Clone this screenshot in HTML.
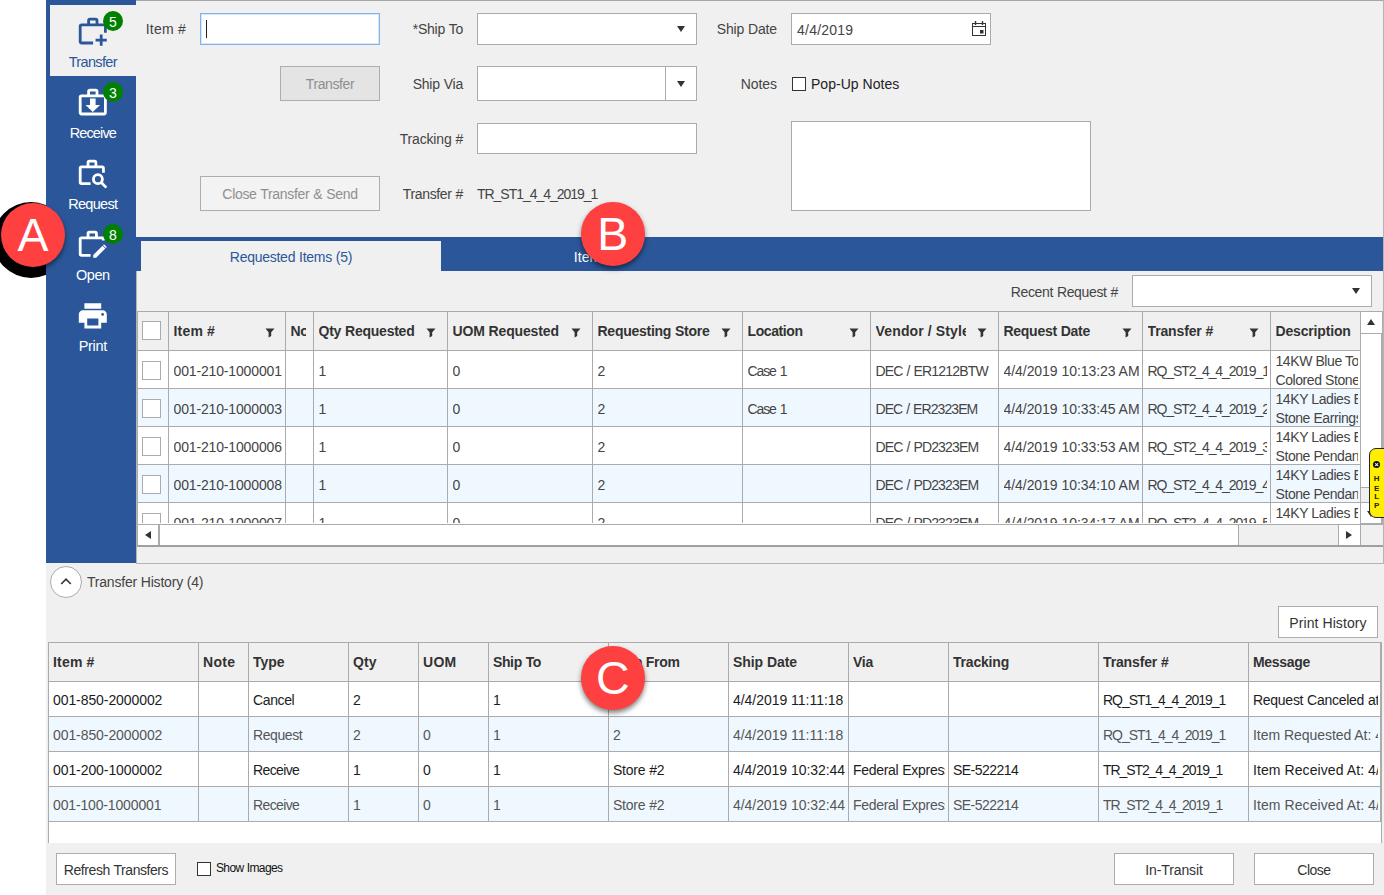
<!DOCTYPE html>
<html>
<head>
<meta charset="utf-8">
<title>Transfer</title>
<style>
*{box-sizing:border-box;margin:0;padding:0}
html,body{width:1384px;height:895px;overflow:hidden;background:#fff}
body{position:relative;font-family:"Liberation Sans",sans-serif;font-size:14px;color:#444;letter-spacing:-0.15px}
.abs{position:absolute}
#app{position:absolute;left:46px;top:0;width:1338px;height:895px;background:#f0f0f0}
#topline{position:absolute;left:136px;top:0;width:1248px;height:1px;background:#a6a6a6}
#rightline{position:absolute;left:1383px;top:0;width:1px;height:564px;background:#b4b4b4}
#side{position:absolute;left:46px;top:0;width:90px;height:563px;background:#2b579a}
#seltab{position:absolute;left:50px;top:5px;width:86px;height:71px;background:#f0f0f0}
.slabel{position:absolute;left:46px;width:94px;text-align:center;color:#fff;font-size:14.5px;line-height:16px}
.badge{position:absolute;width:20px;height:20px;border-radius:50%;background:#008000;color:#fff;font-size:14px;line-height:22.6px;text-align:center;letter-spacing:0}
.t{position:absolute;line-height:18px;height:18px;white-space:pre}
.box{position:absolute;background:#fff;border:1px solid #ababab}
.btn{position:absolute;border:1px solid #adadad;text-align:center;white-space:nowrap}
.arrow{position:absolute;width:0;height:0;border-left:4.4px solid transparent;border-right:4.4px solid transparent;border-top:6px solid #333}
#bluebar{position:absolute;left:136px;top:237px;width:1247px;height:34px;background:#2b579a}
#tab1{position:absolute;left:141px;top:241px;width:300px;height:30px;background:#f0f0f0}
.cb{position:absolute;background:#fff;border:1px solid #ababab}
.hl{position:absolute;height:1px;background:#ababab}
.vl{position:absolute;width:1px;background:#ababab}
.clip{position:absolute;overflow:hidden}
</style>
</head>
<body>
<div id="app"></div><div id="topline"></div><div id="rightline"></div><div id="side"></div><div id="seltab"></div><svg class="abs" style="left:76.4px;top:15.2px" width="33.6" height="33.6" viewBox="0 0 24 24" fill="none" stroke="#2b579a" stroke-width="2"><path d="M12.2 20H4a1 1 0 0 1-1-1V8a1 1 0 0 1 1-1H21V12.6"/><path d="M9 7V4a1 1 0 0 1 1-1h4a1 1 0 0 1 1 1V7"/><path d="M14 18H22M18 14V22"/></svg><svg class="abs" style="left:76.4px;top:86.2px" width="33.6" height="33.6" viewBox="0 0 24 24" fill="none" stroke="#fff" stroke-width="2"><path d="M4 7H20a1 1 0 0 1 1 1V19a1 1 0 0 1-1 1H4a1 1 0 0 1-1-1V8a1 1 0 0 1 1-1z"/><path d="M9 7V4a1 1 0 0 1 1-1h4a1 1 0 0 1 1 1V7"/><path d="M10 9h4v4.5h3.2l-5.2 5-5.2-5H10z" fill="#fff" stroke="none"/></svg><svg class="abs" style="left:76.4px;top:157.2px" width="33.6" height="33.6" viewBox="0 0 24 24" fill="none" stroke="#fff" stroke-width="2"><path d="M10.4 19H4a1 1 0 0 1-1-1V8a1 1 0 0 1 1-1H18.6a1 1 0 0 1 1 1V11.2"/><path d="M8.6 7V4a1 1 0 0 1 1-1h3.6a1 1 0 0 1 1 1V7"/><circle cx="15.65" cy="15.85" r="3.2"/><path d="M18 18.2L21.7 21.9" stroke-width="1.9"/></svg><svg class="abs" style="left:76.4px;top:228.2px" width="33.6" height="33.6" viewBox="0 0 24 24" fill="none" stroke="#fff" stroke-width="2"><path d="M10.4 19.6H4a1 1 0 0 1-1-1V8a1 1 0 0 1 1-1H19.5V9"/><path d="M8.6 7V4a1 1 0 0 1 1-1h4a1 1 0 0 1 1 1V7"/><path d="M12.3 21.2V19.3L18.95 12.65 20.95 14.65 14.4 21.2z M19.3 12.3L20 11.6 22 13.6 21.3 14.3z" fill="#fff" stroke="none"/></svg><svg class="abs" style="left:76.4px;top:299.2px" width="33.6" height="33.6" viewBox="0 0 24 24"><path fill="#fff" d="M18,3H6V7H18M19,12A1,1 0 0,1 18,11A1,1 0 0,1 19,10A1,1 0 0,1 20,11A1,1 0 0,1 19,12M16,19H8V14H16M19,8H5A3,3 0 0,0 2,11V17H6V21H18V17H22V11A3,3 0 0,0 19,8Z"/></svg><div class="t" style="left:-57.2px;width:300px;text-align:center;top:53px;color:#2b579a;font-size:14.5px;letter-spacing:-0.644px;">Transfer</div><div class="t" style="left:-57.2px;width:300px;text-align:center;top:124px;color:#fff;font-size:14.5px;letter-spacing:-0.87px;">Receive</div><div class="t" style="left:-57.2px;width:300px;text-align:center;top:195px;color:#fff;font-size:14.5px;letter-spacing:-0.674px;">Request</div><div class="t" style="left:-57.2px;width:300px;text-align:center;top:266px;color:#fff;font-size:14.5px;letter-spacing:-0.421px;">Open</div><div class="t" style="left:-57.2px;width:300px;text-align:center;top:337px;color:#fff;font-size:14.5px;letter-spacing:-0.306px;">Print</div><div class="badge" style="left:103px;top:11px">5</div><div class="badge" style="left:103px;top:82px">3</div><div class="badge" style="left:103px;top:224px">8</div><div class="t" style="right:1198px;top:20px;letter-spacing:0.279px;word-spacing:-0.279px;">Item #</div><div class="box" style="left:200px;top:13px;width:180px;height:32px;border-color:#7eb4ea;box-shadow:inset 0 0 0 1px #d6e8f9"></div><div class="abs" style="left:206px;top:20px;width:1px;height:18px;background:#222;"></div><div class="btn" style="left:280px;top:66px;width:100px;height:35px;line-height:34px;background:#e4e4e4;color:#8f8f8f;letter-spacing:-0.414px;">Transfer</div><div class="btn" style="left:200px;top:176px;width:180px;height:35px;line-height:34px;background:#f3f3f3;color:#8f8f8f;letter-spacing:-0.309px;word-spacing:0.309px;">Close Transfer &amp; Send</div><div class="t" style="right:921px;top:20px;letter-spacing:-0.229px;word-spacing:0.229px;">*Ship To</div><div class="box" style="left:477px;top:13px;width:220px;height:32px;"></div><div class="arrow" style="left:676.7px;top:26px"></div><div class="t" style="right:921px;top:75px;letter-spacing:-0.229px;word-spacing:0.229px;">Ship Via</div><div class="box" style="left:477px;top:66px;width:220px;height:35px;"></div><div class="vl" style="left:665px;top:67px;height:33px;background:#ababab"></div><div class="arrow" style="left:676.7px;top:81px"></div><div class="t" style="right:921px;top:130px;letter-spacing:-0.172px;word-spacing:0.172px;">Tracking #</div><div class="box" style="left:477px;top:123px;width:220px;height:31px;"></div><div class="t" style="right:921px;top:185px;letter-spacing:-0.331px;word-spacing:0.331px;">Transfer #</div><div class="t" style="left:477px;top:185px;letter-spacing:-1.028px;">TR_ST1_4_4_2019_1</div><div class="t" style="right:607px;top:20px;letter-spacing:-0.148px;word-spacing:0.148px;">Ship Date</div><div class="box" style="left:791px;top:13px;width:200px;height:32px;"></div><div class="t" style="left:797px;top:21px;letter-spacing:0.225px;">4/4/2019</div><svg class="abs" style="left:971px;top:20px" width="16" height="17" viewBox="0 0 16 17" fill="none" stroke="#333" stroke-width="1"><rect x="1.5" y="3.5" width="13" height="12"/><path d="M1.5 6.5H14.5"/><path d="M4.5 1V5M11.5 1V5" stroke-width="1.4"/><rect x="9" y="10" width="3.5" height="3.5" fill="#333" stroke="none"/></svg><div class="t" style="right:607px;top:75px;letter-spacing:-0.056px;">Notes</div><div class="cb" style="left:792px;top:77px;width:14px;height:14px;border-color:#333"></div><div class="t" style="left:811px;top:75px;color:#222;letter-spacing:0.033px;word-spacing:-0.033px;">Pop-Up Notes</div><div class="box" style="left:791px;top:121px;width:300px;height:90px;"></div><div id="bluebar"></div><div id="tab1"></div><div class="t" style="left:141px;width:300px;text-align:center;top:248px;color:#2b579a;letter-spacing:-0.267px;word-spacing:0.267px;">Requested Items (5)</div><div class="t" style="left:441px;width:300px;text-align:center;top:248px;color:#fff;letter-spacing:0.013px;">Items</div><div class="t" style="right:266px;top:283px;letter-spacing:-0.341px;word-spacing:0.341px;">Recent Request #</div><div class="box" style="left:1132px;top:275px;width:240px;height:32px;"></div><div class="arrow" style="left:1351.7px;top:288px"></div><div class="abs" style="left:137px;top:311px;width:1246px;height:235px;background:#fff;"></div><div class="abs" style="left:137px;top:311px;width:1223px;height:39px;background:#f0f0f0;"></div><div class="abs" style="left:137px;top:388px;width:1223px;height:38px;background:#f0f8ff;"></div><div class="abs" style="left:137px;top:464px;width:1223px;height:38px;background:#f0f8ff;"></div><div class="clip" style="left:173.5px;top:322px;width:79px;height:20px"><div class="t" style="left:0;top:0;font-weight:bold;color:#333;letter-spacing:0.226px;word-spacing:-0.226px;">Item #</div></div><svg class="abs" style="left:264.5px;top:327.5px" width="10" height="10" viewBox="0 0 10 10"><path d="M0.5 0.5H9.5L6.2 4.3V8L3.6 9.5V4.3Z" fill="#333"/></svg><div class="clip" style="left:290.5px;top:322px;width:15px;height:20px"><div class="t" style="left:0;top:0;font-weight:bold;color:#333;letter-spacing:-0.25px;">No</div></div><div class="clip" style="left:318.5px;top:322px;width:96px;height:20px"><div class="t" style="left:0;top:0;font-weight:bold;color:#333;letter-spacing:-0.234px;word-spacing:0.234px;">Qty Requested</div></div><svg class="abs" style="left:426px;top:327.5px" width="10" height="10" viewBox="0 0 10 10"><path d="M0.5 0.5H9.5L6.2 4.3V8L3.6 9.5V4.3Z" fill="#333"/></svg><div class="clip" style="left:452.5px;top:322px;width:107px;height:20px"><div class="t" style="left:0;top:0;font-weight:bold;color:#333;letter-spacing:-0.152px;word-spacing:0.152px;">UOM Requested</div></div><svg class="abs" style="left:571px;top:327.5px" width="10" height="10" viewBox="0 0 10 10"><path d="M0.5 0.5H9.5L6.2 4.3V8L3.6 9.5V4.3Z" fill="#333"/></svg><div class="clip" style="left:597.5px;top:322px;width:112px;height:20px"><div class="t" style="left:0;top:0;font-weight:bold;color:#333;letter-spacing:-0.26px;word-spacing:0.26px;">Requesting Store</div></div><svg class="abs" style="left:721px;top:327.5px" width="10" height="10" viewBox="0 0 10 10"><path d="M0.5 0.5H9.5L6.2 4.3V8L3.6 9.5V4.3Z" fill="#333"/></svg><div class="clip" style="left:747.5px;top:322px;width:90px;height:20px"><div class="t" style="left:0;top:0;font-weight:bold;color:#333;letter-spacing:-0.393px;">Location</div></div><svg class="abs" style="left:849px;top:327.5px" width="10" height="10" viewBox="0 0 10 10"><path d="M0.5 0.5H9.5L6.2 4.3V8L3.6 9.5V4.3Z" fill="#333"/></svg><div class="clip" style="left:875.5px;top:322px;width:90px;height:20px"><div class="t" style="left:0;top:0;font-weight:bold;color:#333;letter-spacing:0.159px;word-spacing:-0.159px;">Vendor / Style</div></div><svg class="abs" style="left:976.5px;top:327.5px" width="10" height="10" viewBox="0 0 10 10"><path d="M0.5 0.5H9.5L6.2 4.3V8L3.6 9.5V4.3Z" fill="#333"/></svg><div class="clip" style="left:1003.5px;top:322px;width:106px;height:20px"><div class="t" style="left:0;top:0;font-weight:bold;color:#333;letter-spacing:-0.279px;word-spacing:0.279px;">Request Date</div></div><svg class="abs" style="left:1121.7px;top:327.5px" width="10" height="10" viewBox="0 0 10 10"><path d="M0.5 0.5H9.5L6.2 4.3V8L3.6 9.5V4.3Z" fill="#333"/></svg><div class="clip" style="left:1147.5px;top:322px;width:90px;height:20px"><div class="t" style="left:0;top:0;font-weight:bold;color:#333;letter-spacing:-0.137px;word-spacing:0.137px;">Transfer #</div></div><svg class="abs" style="left:1249.3px;top:327.5px" width="10" height="10" viewBox="0 0 10 10"><path d="M0.5 0.5H9.5L6.2 4.3V8L3.6 9.5V4.3Z" fill="#333"/></svg><div class="clip" style="left:1275.5px;top:322px;width:78px;height:20px"><div class="t" style="left:0;top:0;font-weight:bold;color:#333;letter-spacing:-0.165px;">Description</div></div><div class="clip" style="left:0;top:0;width:1384px;height:522.5px"><div class="cb" style="left:142px;top:361px;width:19px;height:19px"></div><div class="clip" style="left:173.5px;top:362px;width:108.5px;height:20px"><div class="t" style="left:0;top:0;letter-spacing:-0.15px;">001-210-1000001</div></div><div class="clip" style="left:318.5px;top:362px;width:125.5px;height:20px"><div class="t" style="left:0;top:0;letter-spacing:-0.15px;">1</div></div><div class="clip" style="left:452.5px;top:362px;width:136.5px;height:20px"><div class="t" style="left:0;top:0;letter-spacing:-0.15px;">0</div></div><div class="clip" style="left:597.5px;top:362px;width:141.5px;height:20px"><div class="t" style="left:0;top:0;letter-spacing:-0.15px;">2</div></div><div class="clip" style="left:747.5px;top:362px;width:119.5px;height:20px"><div class="t" style="left:0;top:0;letter-spacing:-1.092px;word-spacing:1.092px;">Case 1</div></div><div class="clip" style="left:875.5px;top:362px;width:119.5px;height:20px"><div class="t" style="left:0;top:0;letter-spacing:-0.818px;word-spacing:0.818px;">DEC / ER1212BTW</div></div><div class="clip" style="left:1003.5px;top:362px;width:135.5px;height:20px"><div class="t" style="left:0;top:0;letter-spacing:-0.056px;word-spacing:0.056px;">4/4/2019 10:13:23 AM</div></div><div class="clip" style="left:1147.5px;top:362px;width:119.5px;height:20px"><div class="t" style="left:0;top:0;letter-spacing:-1.106px;">RQ_ST2_4_4_2019_1</div></div><div class="clip" style="left:1275.5px;top:352px;width:82.5px;height:38px"><div class="t" style="left:0;top:0;letter-spacing:-0.15px;letter-spacing:-0.42px">14KW Blue Topaz</div><div class="t" style="left:0;top:19px;letter-spacing:-0.42px">Colored Stone</div></div><div class="cb" style="left:142px;top:399px;width:19px;height:19px"></div><div class="clip" style="left:173.5px;top:400px;width:108.5px;height:20px"><div class="t" style="left:0;top:0;letter-spacing:-0.15px;">001-210-1000003</div></div><div class="clip" style="left:318.5px;top:400px;width:125.5px;height:20px"><div class="t" style="left:0;top:0;letter-spacing:-0.15px;">1</div></div><div class="clip" style="left:452.5px;top:400px;width:136.5px;height:20px"><div class="t" style="left:0;top:0;letter-spacing:-0.15px;">0</div></div><div class="clip" style="left:597.5px;top:400px;width:141.5px;height:20px"><div class="t" style="left:0;top:0;letter-spacing:-0.15px;">2</div></div><div class="clip" style="left:747.5px;top:400px;width:119.5px;height:20px"><div class="t" style="left:0;top:0;letter-spacing:-1.092px;word-spacing:1.092px;">Case 1</div></div><div class="clip" style="left:875.5px;top:400px;width:119.5px;height:20px"><div class="t" style="left:0;top:0;letter-spacing:-0.919px;word-spacing:0.919px;">DEC / ER2323EM</div></div><div class="clip" style="left:1003.5px;top:400px;width:135.5px;height:20px"><div class="t" style="left:0;top:0;letter-spacing:-0.056px;word-spacing:0.056px;">4/4/2019 10:33:45 AM</div></div><div class="clip" style="left:1147.5px;top:400px;width:119.5px;height:20px"><div class="t" style="left:0;top:0;letter-spacing:-1.106px;">RQ_ST2_4_4_2019_2</div></div><div class="clip" style="left:1275.5px;top:390px;width:82.5px;height:38px"><div class="t" style="left:0;top:0;letter-spacing:-0.15px;letter-spacing:-0.42px">14KY Ladies Emerald</div><div class="t" style="left:0;top:19px;letter-spacing:-0.42px">Stone Earrings</div></div><div class="cb" style="left:142px;top:437px;width:19px;height:19px"></div><div class="clip" style="left:173.5px;top:438px;width:108.5px;height:20px"><div class="t" style="left:0;top:0;letter-spacing:-0.15px;">001-210-1000006</div></div><div class="clip" style="left:318.5px;top:438px;width:125.5px;height:20px"><div class="t" style="left:0;top:0;letter-spacing:-0.15px;">1</div></div><div class="clip" style="left:452.5px;top:438px;width:136.5px;height:20px"><div class="t" style="left:0;top:0;letter-spacing:-0.15px;">0</div></div><div class="clip" style="left:597.5px;top:438px;width:141.5px;height:20px"><div class="t" style="left:0;top:0;letter-spacing:-0.15px;">2</div></div><div class="clip" style="left:875.5px;top:438px;width:119.5px;height:20px"><div class="t" style="left:0;top:0;letter-spacing:-0.836px;word-spacing:0.836px;">DEC / PD2323EM</div></div><div class="clip" style="left:1003.5px;top:438px;width:135.5px;height:20px"><div class="t" style="left:0;top:0;letter-spacing:-0.056px;word-spacing:0.056px;">4/4/2019 10:33:53 AM</div></div><div class="clip" style="left:1147.5px;top:438px;width:119.5px;height:20px"><div class="t" style="left:0;top:0;letter-spacing:-1.106px;">RQ_ST2_4_4_2019_3</div></div><div class="clip" style="left:1275.5px;top:428px;width:82.5px;height:38px"><div class="t" style="left:0;top:0;letter-spacing:-0.15px;letter-spacing:-0.42px">14KY Ladies Emerald</div><div class="t" style="left:0;top:19px;letter-spacing:-0.42px">Stone Pendant</div></div><div class="cb" style="left:142px;top:475px;width:19px;height:19px"></div><div class="clip" style="left:173.5px;top:476px;width:108.5px;height:20px"><div class="t" style="left:0;top:0;letter-spacing:-0.15px;">001-210-1000008</div></div><div class="clip" style="left:318.5px;top:476px;width:125.5px;height:20px"><div class="t" style="left:0;top:0;letter-spacing:-0.15px;">1</div></div><div class="clip" style="left:452.5px;top:476px;width:136.5px;height:20px"><div class="t" style="left:0;top:0;letter-spacing:-0.15px;">0</div></div><div class="clip" style="left:597.5px;top:476px;width:141.5px;height:20px"><div class="t" style="left:0;top:0;letter-spacing:-0.15px;">2</div></div><div class="clip" style="left:875.5px;top:476px;width:119.5px;height:20px"><div class="t" style="left:0;top:0;letter-spacing:-0.836px;word-spacing:0.836px;">DEC / PD2323EM</div></div><div class="clip" style="left:1003.5px;top:476px;width:135.5px;height:20px"><div class="t" style="left:0;top:0;letter-spacing:-0.056px;word-spacing:0.056px;">4/4/2019 10:34:10 AM</div></div><div class="clip" style="left:1147.5px;top:476px;width:119.5px;height:20px"><div class="t" style="left:0;top:0;letter-spacing:-1.106px;">RQ_ST2_4_4_2019_4</div></div><div class="clip" style="left:1275.5px;top:466px;width:82.5px;height:38px"><div class="t" style="left:0;top:0;letter-spacing:-0.15px;letter-spacing:-0.42px">14KY Ladies Emerald</div><div class="t" style="left:0;top:19px;letter-spacing:-0.42px">Stone Pendant</div></div><div class="cb" style="left:142px;top:513px;width:19px;height:19px"></div><div class="clip" style="left:173.5px;top:514px;width:108.5px;height:20px"><div class="t" style="left:0;top:0;letter-spacing:-0.15px;">001-210-1000007</div></div><div class="clip" style="left:318.5px;top:514px;width:125.5px;height:20px"><div class="t" style="left:0;top:0;letter-spacing:-0.15px;">1</div></div><div class="clip" style="left:452.5px;top:514px;width:136.5px;height:20px"><div class="t" style="left:0;top:0;letter-spacing:-0.15px;">0</div></div><div class="clip" style="left:597.5px;top:514px;width:141.5px;height:20px"><div class="t" style="left:0;top:0;letter-spacing:-0.15px;">2</div></div><div class="clip" style="left:875.5px;top:514px;width:119.5px;height:20px"><div class="t" style="left:0;top:0;letter-spacing:-0.836px;word-spacing:0.836px;">DEC / PD2323EM</div></div><div class="clip" style="left:1003.5px;top:514px;width:135.5px;height:20px"><div class="t" style="left:0;top:0;letter-spacing:-0.056px;word-spacing:0.056px;">4/4/2019 10:34:17 AM</div></div><div class="clip" style="left:1147.5px;top:514px;width:119.5px;height:20px"><div class="t" style="left:0;top:0;letter-spacing:-1.106px;">RQ_ST2_4_4_2019_5</div></div><div class="clip" style="left:1275.5px;top:504px;width:82.5px;height:38px"><div class="t" style="left:0;top:0;letter-spacing:-0.15px;letter-spacing:-0.42px">14KY Ladies Emerald</div><div class="t" style="left:0;top:19px;letter-spacing:-0.42px">Stone Pendant</div></div><div class="hl" style="left:137px;top:350px;width:1223px;background:#ababab"></div><div class="hl" style="left:137px;top:388px;width:1223px;background:#ababab"></div><div class="hl" style="left:137px;top:426px;width:1223px;background:#ababab"></div><div class="hl" style="left:137px;top:464px;width:1223px;background:#ababab"></div><div class="hl" style="left:137px;top:502px;width:1223px;background:#ababab"></div><div class="hl" style="left:137px;top:540px;width:1223px;background:#ababab"></div></div><div class="cb" style="left:142px;top:321px;width:19px;height:19px"></div><div class="vl" style="left:168px;top:311px;height:211.5px;background:#ababab"></div><div class="vl" style="left:285px;top:311px;height:211.5px;background:#ababab"></div><div class="vl" style="left:313px;top:311px;height:211.5px;background:#ababab"></div><div class="vl" style="left:447px;top:311px;height:211.5px;background:#ababab"></div><div class="vl" style="left:592px;top:311px;height:211.5px;background:#ababab"></div><div class="vl" style="left:742px;top:311px;height:211.5px;background:#ababab"></div><div class="vl" style="left:870px;top:311px;height:211.5px;background:#ababab"></div><div class="vl" style="left:998px;top:311px;height:211.5px;background:#ababab"></div><div class="vl" style="left:1142px;top:311px;height:211.5px;background:#ababab"></div><div class="vl" style="left:1270px;top:311px;height:211.5px;background:#ababab"></div><div class="vl" style="left:1360px;top:311px;height:235px;background:#ababab"></div><div class="hl" style="left:137px;top:311px;width:1246px;background:#ababab"></div><div class="vl" style="left:137px;top:311px;height:235px;background:#ababab"></div><div class="hl" style="left:137px;top:545px;width:1246px;background:#a0a0a0"></div><div class="hl" style="left:137px;top:546px;width:1246px;background:#a0a0a0"></div><div class="abs" style="left:1361px;top:313px;width:22px;height:211px;background:#f0f0f0;"></div><div class="abs" style="left:1361px;top:312px;width:21px;height:21px;background:#fff;"></div><div class="abs" style="left:1360px;top:333px;width:22px;height:155px;background:#fff;border:1px solid #ababab"></div><div class="hl" style="left:1361px;top:333px;width:22px;background:#ababab"></div><div class="vl" style="left:1382px;top:312px;height:212px;background:#ababab"></div><div class="abs" style="left:1366.6px;top:318.5px;width:0;height:0;border-left:4.4px solid transparent;border-right:4.4px solid transparent;border-bottom:6px solid #333"></div><div class="abs" style="left:1360px;top:502px;width:22px;height:22px;background:#fff;border:1px solid #ababab"></div><div class="abs" style="left:1366.6px;top:511px;width:0;height:0;border-left:4.4px solid transparent;border-right:4.4px solid transparent;border-top:6px solid #333"></div><div class="hl" style="left:137px;top:524px;width:1246px;background:#ababab"></div><div class="abs" style="left:139px;top:525px;width:1244px;height:20px;background:#f0f0f0;"></div><div class="abs" style="left:160px;top:525px;width:1078px;height:20px;background:#fff;"></div><div class="vl" style="left:158px;top:525px;height:20px;background:#ababab"></div><div class="vl" style="left:159px;top:525px;height:20px;background:#ababab"></div><div class="vl" style="left:1238px;top:525px;height:20px;background:#ababab"></div><div class="vl" style="left:1338px;top:525px;height:20px;background:#ababab"></div><div class="vl" style="left:1360px;top:525px;height:20px;background:#ababab"></div><div class="abs" style="left:1339px;top:525px;width:21px;height:20px;background:#fff;"></div><div class="abs" style="left:138px;top:525px;width:20px;height:20px;background:#fff;"></div><div class="abs" style="left:145px;top:531px;width:0;height:0;border-top:4px solid transparent;border-bottom:4px solid transparent;border-right:6.5px solid #333"></div><div class="abs" style="left:1346px;top:531px;width:0;height:0;border-top:4px solid transparent;border-bottom:4px solid transparent;border-left:6.5px solid #333"></div><div class="abs" style="left:1369px;top:448px;width:20px;height:70px;background:#ffee00;border:1px solid #222;border-radius:7px 0 0 7px"></div><div class="abs" style="left:1372.7px;top:461.1px;width:7.4px;height:7.4px;border-radius:50%;background:#111"></div><svg class="abs" style="left:1372.7px;top:461.1px" width="7.4" height="7.4" viewBox="0 0 8 8"><path d="M2.4 2.6L5.6 5.4M5.6 2.6L2.4 5.4" stroke="#fff" stroke-width="1.1"/></svg><div class="abs" style="left:1371.6px;top:474px;width:10px;text-align:center;font-size:8px;font-weight:bold;line-height:10px;color:#2a1c00;letter-spacing:0">H</div><div class="abs" style="left:1371.6px;top:483.6px;width:10px;text-align:center;font-size:8px;font-weight:bold;line-height:10px;color:#2a1c00;letter-spacing:0">E</div><div class="abs" style="left:1371.6px;top:492.2px;width:10px;text-align:center;font-size:8px;font-weight:bold;line-height:10px;color:#2a1c00;letter-spacing:0">L</div><div class="abs" style="left:1371.6px;top:501.2px;width:10px;text-align:center;font-size:8px;font-weight:bold;line-height:10px;color:#2a1c00;letter-spacing:0">P</div><div class="vl" style="left:136px;top:271px;height:292px;background:#b4b4b4"></div><div class="hl" style="left:136px;top:563px;width:1248px;background:#b4b4b4"></div><div class="abs" style="left:50px;top:566px;width:32px;height:32px;border-radius:50%;background:#fff;border:1px solid #ababab"></div><svg class="abs" style="left:59px;top:576px" width="14" height="10" viewBox="0 0 14 10"><path d="M2.2 8L7 3.2L11.8 8" fill="none" stroke="#333" stroke-width="1.6"/></svg><div class="t" style="left:87px;top:573px;letter-spacing:-0.209px;word-spacing:0.209px;">Transfer History (4)</div><div class="btn" style="left:1278px;top:606px;width:100px;height:32px;line-height:32px;background:#fff;color:#333;letter-spacing:0.089px;word-spacing:-0.089px;">Print History</div><div class="abs" style="left:48px;top:642px;width:1334px;height:201px;background:#fff;"></div><div class="abs" style="left:48px;top:642px;width:1334px;height:39px;background:#f0f0f0;"></div><div class="abs" style="left:48px;top:716px;width:1334px;height:35px;background:#f0f8ff;"></div><div class="abs" style="left:48px;top:786px;width:1334px;height:35px;background:#f0f8ff;"></div><div class="clip" style="left:53px;top:653px;width:142px;height:20px"><div class="t" style="left:0;top:0;font-weight:bold;color:#333;letter-spacing:0.226px;word-spacing:-0.226px;">Item #</div></div><div class="clip" style="left:203px;top:653px;width:42px;height:20px"><div class="t" style="left:0;top:0;font-weight:bold;color:#333;letter-spacing:0.344px;">Note</div></div><div class="clip" style="left:253px;top:653px;width:92px;height:20px"><div class="t" style="left:0;top:0;font-weight:bold;color:#333;letter-spacing:-0.035px;">Type</div></div><div class="clip" style="left:353px;top:653px;width:62px;height:20px"><div class="t" style="left:0;top:0;font-weight:bold;color:#333;letter-spacing:0.052px;">Qty</div></div><div class="clip" style="left:423px;top:653px;width:62px;height:20px"><div class="t" style="left:0;top:0;font-weight:bold;color:#333;letter-spacing:0.276px;">UOM</div></div><div class="clip" style="left:493px;top:653px;width:112px;height:20px"><div class="t" style="left:0;top:0;font-weight:bold;color:#333;letter-spacing:-0.383px;word-spacing:0.383px;">Ship To</div></div><div class="clip" style="left:613px;top:653px;width:112px;height:20px"><div class="t" style="left:0;top:0;font-weight:bold;color:#333;letter-spacing:-0.342px;word-spacing:0.342px;">Ship From</div></div><div class="clip" style="left:733px;top:653px;width:112px;height:20px"><div class="t" style="left:0;top:0;font-weight:bold;color:#333;letter-spacing:-0.072px;word-spacing:0.072px;">Ship Date</div></div><div class="clip" style="left:853px;top:653px;width:92px;height:20px"><div class="t" style="left:0;top:0;font-weight:bold;color:#333;letter-spacing:-0.255px;">Via</div></div><div class="clip" style="left:953px;top:653px;width:142px;height:20px"><div class="t" style="left:0;top:0;font-weight:bold;color:#333;letter-spacing:-0.199px;">Tracking</div></div><div class="clip" style="left:1103px;top:653px;width:142px;height:20px"><div class="t" style="left:0;top:0;font-weight:bold;color:#333;letter-spacing:-0.137px;word-spacing:0.137px;">Transfer #</div></div><div class="clip" style="left:1253px;top:653px;width:125px;height:20px"><div class="t" style="left:0;top:0;font-weight:bold;color:#333;letter-spacing:-0.308px;">Message</div></div><div class="clip" style="left:53px;top:691px;width:142px;height:20px"><div class="t" style="left:0;top:0;color:#1c1c1c;letter-spacing:-0.083px;">001-850-2000002</div></div><div class="clip" style="left:253px;top:691px;width:92px;height:20px"><div class="t" style="left:0;top:0;color:#1c1c1c;letter-spacing:-0.382px;">Cancel</div></div><div class="clip" style="left:353px;top:691px;width:62px;height:20px"><div class="t" style="left:0;top:0;color:#1c1c1c;letter-spacing:-0.15px;">2</div></div><div class="clip" style="left:493px;top:691px;width:112px;height:20px"><div class="t" style="left:0;top:0;color:#1c1c1c;letter-spacing:-0.15px;">1</div></div><div class="clip" style="left:733px;top:691px;width:112px;height:20px"><div class="t" style="left:0;top:0;color:#1c1c1c;letter-spacing:-0.035px;word-spacing:0.035px;">4/4/2019 11:11:18 AM</div></div><div class="clip" style="left:1103px;top:691px;width:142px;height:20px"><div class="t" style="left:0;top:0;color:#1c1c1c;letter-spacing:-1.048px;">RQ_ST1_4_4_2019_1</div></div><div class="clip" style="left:1253px;top:691px;width:125px;height:20px"><div class="t" style="left:0;top:0;color:#1c1c1c;letter-spacing:-0.274px;word-spacing:0.274px;">Request Canceled at 4/4/2019</div></div><div class="clip" style="left:53px;top:726px;width:142px;height:20px"><div class="t" style="left:0;top:0;color:#555;letter-spacing:-0.083px;">001-850-2000002</div></div><div class="clip" style="left:253px;top:726px;width:92px;height:20px"><div class="t" style="left:0;top:0;color:#555;letter-spacing:-0.408px;">Request</div></div><div class="clip" style="left:353px;top:726px;width:62px;height:20px"><div class="t" style="left:0;top:0;color:#555;letter-spacing:-0.15px;">2</div></div><div class="clip" style="left:423px;top:726px;width:62px;height:20px"><div class="t" style="left:0;top:0;color:#555;letter-spacing:-0.15px;">0</div></div><div class="clip" style="left:493px;top:726px;width:112px;height:20px"><div class="t" style="left:0;top:0;color:#555;letter-spacing:-0.15px;">1</div></div><div class="clip" style="left:613px;top:726px;width:112px;height:20px"><div class="t" style="left:0;top:0;color:#555;letter-spacing:-0.15px;">2</div></div><div class="clip" style="left:733px;top:726px;width:112px;height:20px"><div class="t" style="left:0;top:0;color:#555;letter-spacing:-0.035px;word-spacing:0.035px;">4/4/2019 11:11:18 AM</div></div><div class="clip" style="left:1103px;top:726px;width:142px;height:20px"><div class="t" style="left:0;top:0;color:#555;letter-spacing:-1.048px;">RQ_ST1_4_4_2019_1</div></div><div class="clip" style="left:1253px;top:726px;width:125px;height:20px"><div class="t" style="left:0;top:0;color:#555;letter-spacing:-0.049px;word-spacing:0.049px;">Item Requested At: 4/4/2019</div></div><div class="clip" style="left:53px;top:761px;width:142px;height:20px"><div class="t" style="left:0;top:0;color:#1c1c1c;letter-spacing:-0.083px;">001-200-1000002</div></div><div class="clip" style="left:253px;top:761px;width:92px;height:20px"><div class="t" style="left:0;top:0;color:#1c1c1c;letter-spacing:-0.613px;">Receive</div></div><div class="clip" style="left:353px;top:761px;width:62px;height:20px"><div class="t" style="left:0;top:0;color:#1c1c1c;letter-spacing:-0.15px;">1</div></div><div class="clip" style="left:423px;top:761px;width:62px;height:20px"><div class="t" style="left:0;top:0;color:#1c1c1c;letter-spacing:-0.15px;">0</div></div><div class="clip" style="left:493px;top:761px;width:112px;height:20px"><div class="t" style="left:0;top:0;color:#1c1c1c;letter-spacing:-0.15px;">1</div></div><div class="clip" style="left:613px;top:761px;width:112px;height:20px"><div class="t" style="left:0;top:0;color:#1c1c1c;letter-spacing:-0.234px;word-spacing:0.234px;">Store #2</div></div><div class="clip" style="left:733px;top:761px;width:112px;height:20px"><div class="t" style="left:0;top:0;color:#1c1c1c;letter-spacing:-0.056px;word-spacing:0.056px;">4/4/2019 10:32:44 AM</div></div><div class="clip" style="left:853px;top:761px;width:92px;height:20px"><div class="t" style="left:0;top:0;color:#1c1c1c;letter-spacing:-0.296px;word-spacing:0.296px;">Federal Express</div></div><div class="clip" style="left:953px;top:761px;width:142px;height:20px"><div class="t" style="left:0;top:0;color:#1c1c1c;letter-spacing:-0.529px;">SE-522214</div></div><div class="clip" style="left:1103px;top:761px;width:142px;height:20px"><div class="t" style="left:0;top:0;color:#1c1c1c;letter-spacing:-1.087px;">TR_ST2_4_4_2019_1</div></div><div class="clip" style="left:1253px;top:761px;width:125px;height:20px"><div class="t" style="left:0;top:0;color:#1c1c1c;letter-spacing:0.095px;word-spacing:-0.095px;">Item Received At: 4/4/2019</div></div><div class="clip" style="left:53px;top:796px;width:142px;height:20px"><div class="t" style="left:0;top:0;color:#555;letter-spacing:-0.15px;">001-100-1000001</div></div><div class="clip" style="left:253px;top:796px;width:92px;height:20px"><div class="t" style="left:0;top:0;color:#555;letter-spacing:-0.613px;">Receive</div></div><div class="clip" style="left:353px;top:796px;width:62px;height:20px"><div class="t" style="left:0;top:0;color:#555;letter-spacing:-0.15px;">1</div></div><div class="clip" style="left:423px;top:796px;width:62px;height:20px"><div class="t" style="left:0;top:0;color:#555;letter-spacing:-0.15px;">0</div></div><div class="clip" style="left:493px;top:796px;width:112px;height:20px"><div class="t" style="left:0;top:0;color:#555;letter-spacing:-0.15px;">1</div></div><div class="clip" style="left:613px;top:796px;width:112px;height:20px"><div class="t" style="left:0;top:0;color:#555;letter-spacing:-0.234px;word-spacing:0.234px;">Store #2</div></div><div class="clip" style="left:733px;top:796px;width:112px;height:20px"><div class="t" style="left:0;top:0;color:#555;letter-spacing:-0.056px;word-spacing:0.056px;">4/4/2019 10:32:44 AM</div></div><div class="clip" style="left:853px;top:796px;width:92px;height:20px"><div class="t" style="left:0;top:0;color:#555;letter-spacing:-0.296px;word-spacing:0.296px;">Federal Express</div></div><div class="clip" style="left:953px;top:796px;width:142px;height:20px"><div class="t" style="left:0;top:0;color:#555;letter-spacing:-0.529px;">SE-522214</div></div><div class="clip" style="left:1103px;top:796px;width:142px;height:20px"><div class="t" style="left:0;top:0;color:#555;letter-spacing:-1.087px;">TR_ST2_4_4_2019_1</div></div><div class="clip" style="left:1253px;top:796px;width:125px;height:20px"><div class="t" style="left:0;top:0;color:#555;letter-spacing:0.095px;word-spacing:-0.095px;">Item Received At: 4/4/2019</div></div><div class="hl" style="left:48px;top:681px;width:1334px;background:#ababab"></div><div class="hl" style="left:48px;top:716px;width:1334px;background:#ababab"></div><div class="hl" style="left:48px;top:751px;width:1334px;background:#ababab"></div><div class="hl" style="left:48px;top:786px;width:1334px;background:#ababab"></div><div class="hl" style="left:48px;top:821px;width:1334px;background:#ababab"></div><div class="vl" style="left:198px;top:642px;height:179px;background:#ababab"></div><div class="vl" style="left:248px;top:642px;height:179px;background:#ababab"></div><div class="vl" style="left:348px;top:642px;height:179px;background:#ababab"></div><div class="vl" style="left:418px;top:642px;height:179px;background:#ababab"></div><div class="vl" style="left:488px;top:642px;height:179px;background:#ababab"></div><div class="vl" style="left:608px;top:642px;height:179px;background:#ababab"></div><div class="vl" style="left:728px;top:642px;height:179px;background:#ababab"></div><div class="vl" style="left:848px;top:642px;height:179px;background:#ababab"></div><div class="vl" style="left:948px;top:642px;height:179px;background:#ababab"></div><div class="vl" style="left:1098px;top:642px;height:179px;background:#ababab"></div><div class="vl" style="left:1248px;top:642px;height:179px;background:#ababab"></div><div class="hl" style="left:48px;top:642px;width:1334px;background:#ababab"></div><div class="vl" style="left:48px;top:642px;height:201px;background:#ababab"></div><div class="vl" style="left:1381px;top:642px;height:201px;background:#ababab"></div><div class="vl" style="left:1380px;top:642px;height:179px;background:#ababab"></div><div class="btn" style="left:56px;top:853px;width:120px;height:32px;line-height:32px;background:#fff;color:#333;letter-spacing:-0.435px;word-spacing:0.435px;">Refresh Transfers</div><div class="cb" style="left:197px;top:862px;width:14px;height:14px;border-color:#333"></div><div class="t" style="left:216px;top:859px;color:#111;font-size:12px;letter-spacing:-0.64px;word-spacing:0.64px;">Show Images</div><div class="btn" style="left:1114px;top:853px;width:120px;height:32px;line-height:32px;background:#fff;color:#333;letter-spacing:-0.131px;">In-Transit</div><div class="btn" style="left:1254px;top:853px;width:120px;height:32px;line-height:32px;background:#fff;color:#333;letter-spacing:-0.499px;">Close</div><div class="clip" style="left:0;top:190px;width:46px;height:110px"><div class="abs" style="left:-7px;top:11.5px;width:76px;height:76px;border-radius:50%;background:#000"></div></div><div class="abs" style="left:1.0px;top:202.7px;width:64px;height:64px;border-radius:50%;background:#ff4040;box-shadow:0 3px 5px rgba(0,0,0,.5)"></div><div class="abs" style="left:-7px;top:205.1px;width:80px;height:60px;line-height:60px;text-align:center;color:#fff;font-size:46.5px;letter-spacing:0">A</div><div class="abs" style="left:581.05px;top:202.25px;width:63.5px;height:63.5px;border-radius:50%;background:#ff4040;box-shadow:0 3px 5px rgba(0,0,0,.5)"></div><div class="abs" style="left:572.8px;top:204.4px;width:80px;height:60px;line-height:60px;text-align:center;color:#fff;font-size:46.5px;letter-spacing:0">B</div><div class="abs" style="left:581.15px;top:646.15px;width:63.5px;height:63.5px;border-radius:50%;background:#ff4040;box-shadow:0 3px 5px rgba(0,0,0,.5)"></div><div class="abs" style="left:572.9px;top:648.3px;width:80px;height:60px;line-height:60px;text-align:center;color:#fff;font-size:46.5px;letter-spacing:0">C</div>
</body>
</html>
